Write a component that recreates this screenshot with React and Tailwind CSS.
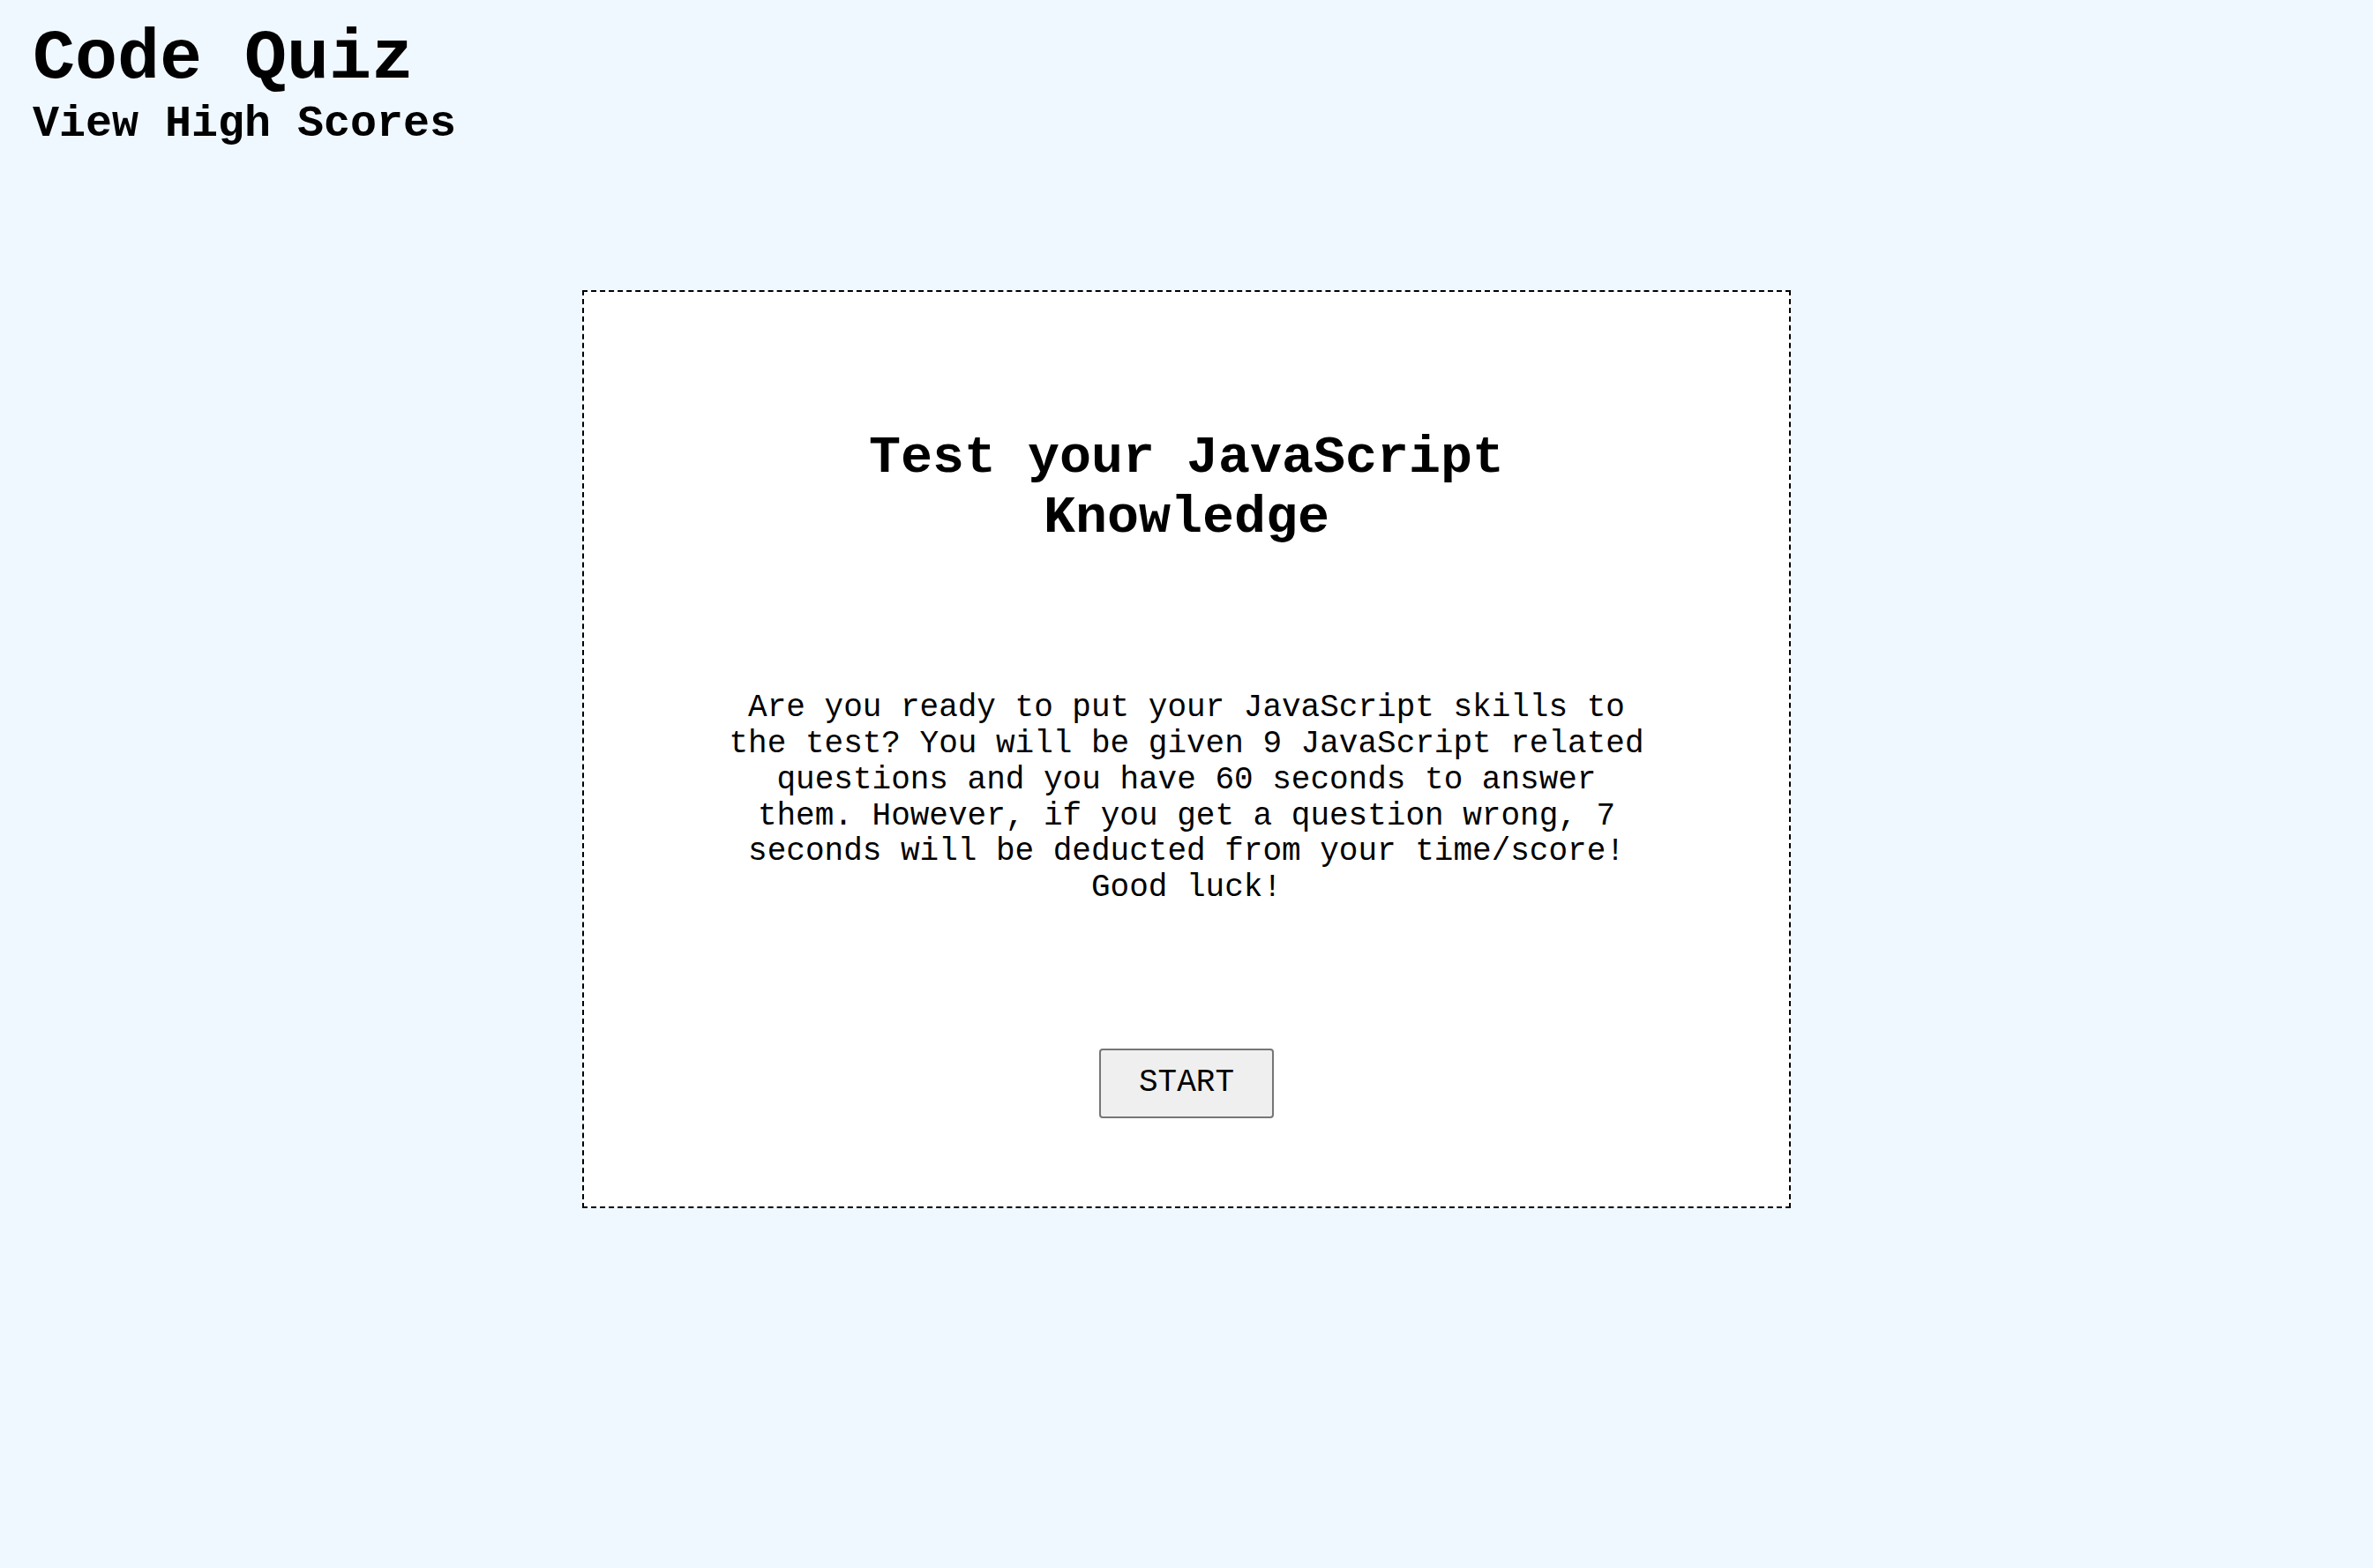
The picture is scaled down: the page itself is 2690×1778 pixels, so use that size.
import React from 'react';

const mono = "font-['Courier_New','Liberation_Mono',monospace]";

const App = () => {
    return (
        <div className={`min-h-screen bg-[#f0f8ff] text-black ${mono}`}>
            {/* Header */}
            <header className="pt-[22px] pl-[37px]">
                <h1 className="text-[80px] font-bold leading-[1.1333]">Code Quiz</h1>
                <a href="#" className="block text-[50px] font-bold leading-[1.1333]">View High Scores</a>
            </header>

            {/* Intro card */}
            <main className="mt-[160px] mx-auto w-[1370px] h-[1041px] bg-white border-2 border-dashed border-black flex flex-col items-center pt-[154px]">
                <div className="w-[1045px] flex flex-col items-center text-center">
                    <h2 className="text-[60px] font-bold leading-[1.1333]">Test your JavaScript Knowledge</h2>
                    <p className="mt-[162px] text-[36px] leading-[1.1333]">
                        Are you ready to put your JavaScript skills to the test? You will be given 9 JavaScript related questions and you have 60 seconds to answer them. However, if you get a question wrong, 7 seconds will be deducted from your time/score! Good luck!
                    </p>
                    <button className="mt-[161px] px-[43px] py-[17px] text-[36px] leading-[1.1333] bg-[#efefef] border-2 border-[#767676] rounded-[4px]">
                        START
                    </button>
                </div>
            </main>
        </div>
    );
};

export default App;
